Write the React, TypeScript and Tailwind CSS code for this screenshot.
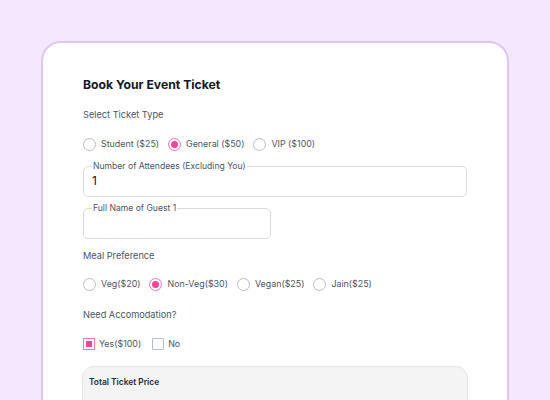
import { useState } from "react";

function Radio({ label, checked, onClick }: { label: string; checked: boolean; onClick: () => void }) {
  return (
    <label className="flex items-center gap-[5px] cursor-pointer" onClick={onClick}>
      <span
        className={
          checked
            ? "grid h-[13px] w-[13px] place-items-center rounded-full border border-[#f472b6] bg-white"
            : "h-[13px] w-[13px] rounded-full border border-[#b8bcc4] bg-white"
        }
      >
        {checked && <span className="h-[7px] w-[7px] rounded-full bg-[#ec4899]" />}
      </span>
      <span>{label}</span>
    </label>
  );
}

function Check({ label, checked, onClick }: { label: string; checked: boolean; onClick: () => void }) {
  return (
    <label className="flex items-center gap-[4px] cursor-pointer" onClick={onClick}>
      <span
        className={
          checked
            ? "grid h-[12px] w-[12px] place-items-center border border-[#f472b6] bg-white"
            : "h-[12px] w-[12px] rounded-[1px] border border-[#b8bcc4] bg-white"
        }
      >
        {checked && <span className="h-[6px] w-[6px] bg-[#ec4899]" />}
      </span>
      <span>{label}</span>
    </label>
  );
}

function Field({ legend, value, className }: { legend: string; value: string; className: string }) {
  return (
    <fieldset className={"h-[35px] rounded-[5px] border border-[#d9dbe0] px-[8px] " + className}>
      <legend className="px-[1px] text-[8.6px] leading-[9px] text-[#4b5563]">{legend}</legend>
      <div className="mt-[2px] h-[16px] text-[12px] leading-[16px] text-[#111827]">{value}</div>
    </fieldset>
  );
}

export default function App() {
  const [ticket, setTicket] = useState("General");
  const [meal, setMeal] = useState("Non-Veg");
  const [stay, setStay] = useState(true);

  return (
    <div
      className="h-[400px] w-[550px] overflow-hidden bg-[#f3e8fd] pt-[41px] pl-[41px]"
      style={{ fontFamily: "Inter, 'Noto Sans', sans-serif" }}
    >
      <div className="h-[400px] w-[468px] rounded-[20px] border-2 border-[#dfc5f7] bg-white px-[40px] pt-[33px]">
        <h1 className="text-[12.2px] font-bold leading-[18px] text-[#111827]">Book Your Event Ticket</h1>
        <p className="mt-[14px] text-[9.2px] leading-[14px] text-[#4b5563]">Select Ticket Type</p>
        <div className="mt-[15px] flex gap-[9px] text-[8.9px] leading-[14px] text-[#4b5563]">
          {[
            ["Student", "Student ($25)"],
            ["General", "General ($50)"],
            ["VIP", "VIP ($100)"],
          ].map(([k, l]) => (
            <Radio key={k} label={l} checked={ticket === k} onClick={() => setTicket(k)} />
          ))}
        </div>
        <Field legend="Number of Attendees (Excluding You)" value="1" className="mt-[11px] w-[384px]" />
        <Field legend="Full Name of Guest 1" value="" className="mt-[7px] w-[188px]" />
        <p className="mt-[10px] text-[9.2px] leading-[14px] text-[#4b5563]">Meal Preference</p>
        <div className="mt-[14px] flex gap-[9px] text-[8.9px] leading-[14px] text-[#4b5563]">
          {[
            ["Veg", "Veg($20)"],
            ["Non-Veg", "Non-Veg($30)"],
            ["Vegan", "Vegan($25)"],
            ["Jain", "Jain($25)"],
          ].map(([k, l]) => (
            <Radio key={k} label={l} checked={meal === k} onClick={() => setMeal(k)} />
          ))}
        </div>
        <p className="mt-[17px] text-[9.2px] leading-[14px] text-[#4b5563]">Need Accomodation?</p>
        <div className="mt-[15px] flex gap-[11px] text-[8.9px] leading-[14px] text-[#4b5563]">
          <Check label="Yes($100)" checked={stay} onClick={() => setStay(true)} />
          <Check label="No" checked={!stay} onClick={() => setStay(false)} />
        </div>
        <div className="mt-[15px] -ml-[1px] h-[60px] w-[386px] rounded-[12px] border border-[#e5e5e5] bg-[#f4f4f4] px-[6px] pt-[9px]">
          <p className="text-[8.4px] font-semibold leading-[12px] text-[#1f2937]">Total Ticket Price</p>
        </div>
      </div>
    </div>
  );
}
